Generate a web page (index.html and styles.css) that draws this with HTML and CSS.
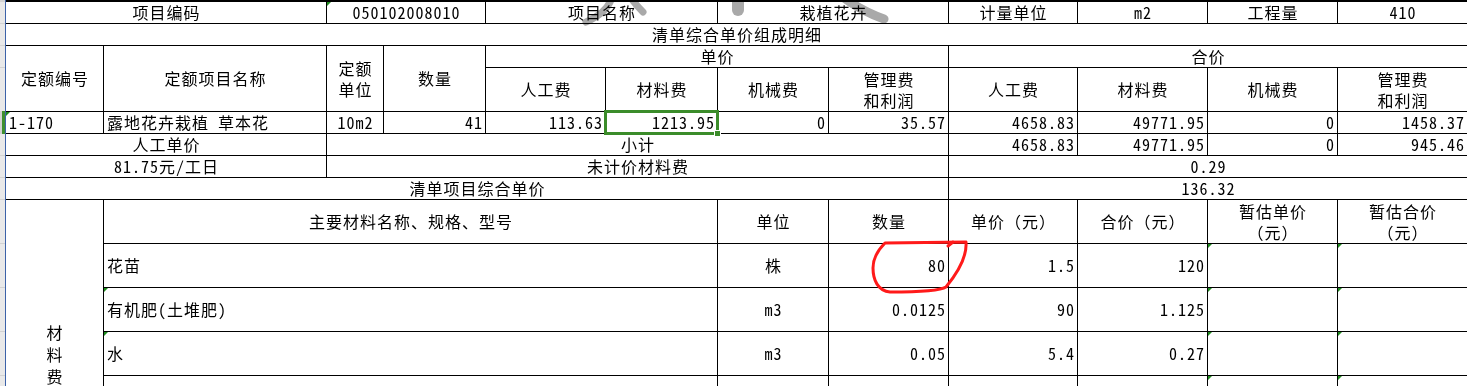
FILE: index.html
```html
<!DOCTYPE html>
<html lang="zh">
<head>
<meta charset="utf-8">
<title>清单综合单价组成明细</title>
<link rel="stylesheet" href="styles.css">
</head>
<body>
<div class="sheet">
  <div class="gutter">
    <div class="g"></div>
    <div class="g"></div>
    <div class="g"></div>
    <div class="g"></div>
    <div class="g sel"></div>
    <div class="g"></div>
    <div class="g"></div>
    <div class="g"></div>
    <div class="g"></div>
    <div class="g"></div>
    <div class="g"></div>
    <div class="g"></div>
    <div class="g"></div>
    <div class="g"></div>
    <div class="g"></div>
  </div>
  <div class="grid">
    <!-- row 1 -->
    <div class="c s2">项目编码</div>
    <div class="c s2 tri">050102008010</div>
    <div class="c s2">项目名称</div>
    <div class="c s2">栽植花卉</div>
    <div class="c">计量单位</div>
    <div class="c">m2</div>
    <div class="c">工程量</div>
    <div class="c">410</div>
    <!-- row 2 -->
    <div class="c s12">清单综合单价组成明细</div>
    <!-- row 3 -->
    <div class="c r2 mid">定额编号</div>
    <div class="c r2 mid">定额项目名称</div>
    <div class="c r2 mid stack"><span>定额</span><span>单位</span></div>
    <div class="c r2 mid">数量</div>
    <div class="c s4">单价</div>
    <div class="c s4">合价</div>
    <!-- row 4 -->
    <div class="c mid">人工费</div>
    <div class="c mid">材料费</div>
    <div class="c mid">机械费</div>
    <div class="c mid stack"><span>管理费</span><span>和利润</span></div>
    <div class="c mid">人工费</div>
    <div class="c mid">材料费</div>
    <div class="c mid">机械费</div>
    <div class="c mid stack"><span>管理费</span><span>和利润</span></div>
    <!-- row 5 -->
    <div class="c l tri">1-170</div>
    <div class="c l">露地花卉栽植 草本花</div>
    <div class="c">10m2</div>
    <div class="c r">41</div>
    <div class="c r">113.63</div>
    <div class="c r selected">1213.95<span class="handle"></span></div>
    <div class="c r">0</div>
    <div class="c r">35.57</div>
    <div class="c r">4658.83</div>
    <div class="c r">49771.95</div>
    <div class="c r">0</div>
    <div class="c r">1458.37</div>
    <!-- row 6 -->
    <div class="c s2">人工单价</div>
    <div class="c s6">小计</div>
    <div class="c r">4658.83</div>
    <div class="c r">49771.95</div>
    <div class="c r">0</div>
    <div class="c r">945.46</div>
    <!-- row 7 -->
    <div class="c s2">81.75元/工日</div>
    <div class="c s6">未计价材料费</div>
    <div class="c s4">0.29</div>
    <!-- row 8 -->
    <div class="c s8">清单项目综合单价</div>
    <div class="c s4">136.32</div>
    <!-- row 9 -->
    <div class="c r7 mid stack vert"><span>材</span><span>料</span><span>费</span></div>
    <div class="c s5 mid">主要材料名称、规格、型号</div>
    <div class="c mid">单位</div>
    <div class="c mid">数量</div>
    <div class="c mid">单价（元）</div>
    <div class="c mid">合价（元）</div>
    <div class="c mid stack"><span>暂估单价</span><span>（元）</span></div>
    <div class="c mid stack"><span>暂估合价</span><span>（元）</span></div>
    <!-- row 10 -->
    <div class="c s5 l mid">花苗</div>
    <div class="c mid">株</div>
    <div class="c r mid">80</div>
    <div class="c r mid">1.5</div>
    <div class="c r mid">120</div>
    <div class="c tri"></div>
    <div class="c tri"></div>
    <!-- row 11 -->
    <div class="c s5 l mid tri">有机肥(土堆肥)</div>
    <div class="c mid">m3</div>
    <div class="c r mid">0.0125</div>
    <div class="c r mid">90</div>
    <div class="c r mid">1.125</div>
    <div class="c tri"></div>
    <div class="c tri"></div>
    <!-- row 12 -->
    <div class="c s5 l mid tri">水</div>
    <div class="c mid">m3</div>
    <div class="c r mid">0.05</div>
    <div class="c r mid">5.4</div>
    <div class="c r mid">0.27</div>
    <div class="c tri"></div>
    <div class="c tri"></div>
    <!-- row 13 -->
    <div class="c s5"></div>
    <div class="c"></div>
    <div class="c"></div>
    <div class="c"></div>
    <div class="c"></div>
    <div class="c tri"></div>
    <div class="c tri"></div>
    <!-- row 14 -->
    <div class="c s5"></div>
    <div class="c"></div>
    <div class="c"></div>
    <div class="c"></div>
    <div class="c"></div>
    <div class="c"></div>
    <div class="c"></div>
    <!-- row 15 -->
    <div class="c s5"></div>
    <div class="c"></div>
    <div class="c"></div>
    <div class="c"></div>
    <div class="c"></div>
    <div class="c"></div>
    <div class="c"></div>
  </div>

  <svg class="watermark" width="340" height="30" viewBox="0 0 340 30" aria-hidden="true">
    <path d="M52 -3 C49 8, 40 16, 26 22"/>
    <path d="M70 -3 Q76 5, 83 12"/>
    <path class="thick" d="M178 -4 L178 10"/>
    <path class="diag" d="M280 -5 C293 5, 307 13, 324 19"/>
  </svg>

  <svg class="ink" width="120" height="70" viewBox="0 0 120 70" aria-hidden="true">
    <path d="M25 13 L106 12 C107 25, 100 40, 86 57 C80 61, 60 62, 30 62 C18 61, 13 50, 13 38 C13 28, 18 20, 25 13 Z"/>
    <path d="M88 16 L93 12"/>
  </svg>
</div>
</body>
</html>
```

FILE: styles.css
```css
html, body {
  margin: 0;
  padding: 0;
  background: #ffffff;
  overflow: hidden;
}

body {
  font-family: "Noto Sans Mono CJK SC", "Noto Sans CJK SC", "DejaVu Sans", sans-serif;
  font-size: 16px;
  letter-spacing: 1px;
  color: #000;
}

.sheet {
  position: relative;
  display: flex;
  align-items: flex-start;
  width: 1480px;
  height: 386px;
}

/* excel row header sliver */
.gutter {
  flex: 0 0 5px;
  display: grid;
  grid-template-columns: 5px;
  grid-template-rows: 21px 21px 21px 43px 21px 21px 21px 21px 43px 43px 43px 43px 43px 43px 43px;
  gap: 1px;
  padding-top: 2px;
  background: #d2d2d2;
  border-right: 1px solid #3c62a8;
  height: 386px;
  box-sizing: border-box;
  align-content: start;
}
.g { background: #e9e9e9; }
.g.sel { box-shadow: inset -3px 0 0 #3f8f2f, 0 -1px 0 #3f8f2f, 0 1px 0 #3f8f2f; clip-path: inset(-1px 0 -1px 2px); }

.grid {
  display: grid;
  grid-template-columns: 97px 222px 56px 101px 119px 111px 110px 119px 128px 129px 129px 129px;
  grid-template-rows: 21px 21px 21px 43px 21px 21px 21px 21px 43px 43px 43px 43px 43px 43px 43px;
  gap: 1px;
  background: #000;
  padding-top: 2px;
  padding-right: 1px;
}

.c {
  position: relative;
  background: #fff;
  display: flex;
  align-items: flex-end;
  justify-content: center;
  text-align: center;
  line-height: 21px;
  padding: 0 2px 0 3px;
  white-space: nowrap;
}
.c.l { justify-content: flex-start; }
.c.r { justify-content: flex-end; }
.c.mid { align-items: center; }
.c.stack { flex-direction: column; justify-content: center; }
.c.stack span { display: block; height: 21px; line-height: 21px; overflow: visible; }
.c.vert span { height: 22px; line-height: 22px; }

.s2 { grid-column: span 2; }
.s4 { grid-column: span 4; }
.s5 { grid-column: span 5; }
.s6 { grid-column: span 6; }
.s8 { grid-column: span 8; }
.s12 { grid-column: span 12; }
.r2 { grid-row: span 2; }
.r7 { grid-row: span 7; }

/* excel green error triangle */
.tri::before {
  content: "";
  position: absolute;
  left: 0;
  top: 0;
  border-top: 4px solid #1e8c1e;
  border-right: 4px solid transparent;
}

.selected {
  outline: 2px solid #3b8c2a;
  box-shadow: inset 0 0 0 1px #3b8c2a;
  z-index: 2;
}
.handle {
  position: absolute;
  right: -4px;
  bottom: -4px;
  width: 5px;
  height: 5px;
  background: #3b8c2a;
  border: 1px solid #fff;
}

.watermark {
  position: absolute;
  left: 560px;
  top: 0;
  fill: none;
  stroke: #a9a9a9;
  stroke-width: 7;
  stroke-linecap: round;
  mix-blend-mode: multiply;
  pointer-events: none;
}
.watermark .thick { stroke-width: 12; }
.watermark .diag { stroke-width: 9; }

.ink {
  position: absolute;
  left: 860px;
  top: 230px;
  fill: none;
  stroke: #ff1a1a;
  stroke-width: 3;
  stroke-linecap: round;
  stroke-linejoin: round;
  pointer-events: none;
}
```
